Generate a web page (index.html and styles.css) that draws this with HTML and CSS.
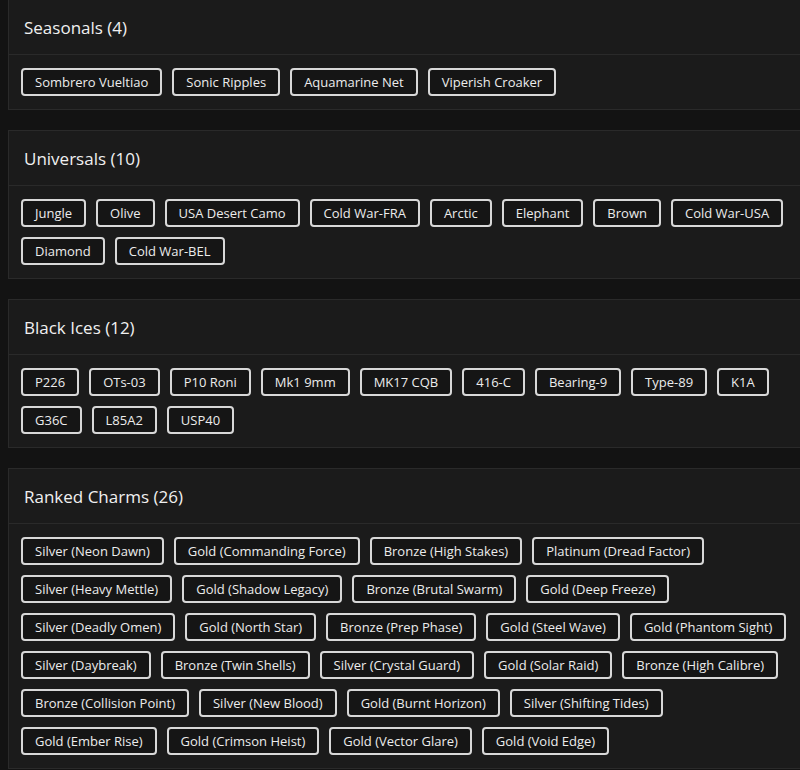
FILE: index.html
```html
<!DOCTYPE html>
<html>
<head>
<meta charset="utf-8">
<link rel="stylesheet" href="styles.css">
</head>
<body>
<main class="page">
  <section class="card">
    <h2 class="card-title">Seasonals (4)</h2>
    <div class="chips">
      <span class="chip">Sombrero Vueltiao</span>
      <span class="chip">Sonic Ripples</span>
      <span class="chip">Aquamarine Net</span>
      <span class="chip">Viperish Croaker</span>
    </div>
  </section>
  <section class="card">
    <h2 class="card-title">Universals (10)</h2>
    <div class="chips">
      <span class="chip">Jungle</span>
      <span class="chip">Olive</span>
      <span class="chip">USA Desert Camo</span>
      <span class="chip">Cold War-FRA</span>
      <span class="chip">Arctic</span>
      <span class="chip">Elephant</span>
      <span class="chip">Brown</span>
      <span class="chip">Cold War-USA</span>
      <span class="chip">Diamond</span>
      <span class="chip">Cold War-BEL</span>
    </div>
  </section>
  <section class="card">
    <h2 class="card-title">Black Ices (12)</h2>
    <div class="chips">
      <span class="chip">P226</span>
      <span class="chip">OTs-03</span>
      <span class="chip">P10 Roni</span>
      <span class="chip">Mk1 9mm</span>
      <span class="chip">MK17 CQB</span>
      <span class="chip">416-C</span>
      <span class="chip">Bearing-9</span>
      <span class="chip">Type-89</span>
      <span class="chip">K1A</span>
      <span class="chip">G36C</span>
      <span class="chip">L85A2</span>
      <span class="chip">USP40</span>
    </div>
  </section>
  <section class="card">
    <h2 class="card-title">Ranked Charms (26)</h2>
    <div class="chips">
      <span class="chip">Silver (Neon Dawn)</span>
      <span class="chip">Gold (Commanding Force)</span>
      <span class="chip">Bronze (High Stakes)</span>
      <span class="chip">Platinum (Dread Factor)</span>
      <span class="chip">Silver (Heavy Mettle)</span>
      <span class="chip">Gold (Shadow Legacy)</span>
      <span class="chip">Bronze (Brutal Swarm)</span>
      <span class="chip">Gold (Deep Freeze)</span>
      <span class="chip">Silver (Deadly Omen)</span>
      <span class="chip">Gold (North Star)</span>
      <span class="chip">Bronze (Prep Phase)</span>
      <span class="chip">Gold (Steel Wave)</span>
      <span class="chip">Gold (Phantom Sight)</span>
      <span class="chip">Silver (Daybreak)</span>
      <span class="chip">Bronze (Twin Shells)</span>
      <span class="chip">Silver (Crystal Guard)</span>
      <span class="chip">Gold (Solar Raid)</span>
      <span class="chip">Bronze (High Calibre)</span>
      <span class="chip">Bronze (Collision Point)</span>
      <span class="chip">Silver (New Blood)</span>
      <span class="chip">Gold (Burnt Horizon)</span>
      <span class="chip">Silver (Shifting Tides)</span>
      <span class="chip">Gold (Ember Rise)</span>
      <span class="chip">Gold (Crimson Heist)</span>
      <span class="chip">Gold (Vector Glare)</span>
      <span class="chip">Gold (Void Edge)</span>
    </div>
  </section>
</main>
</body>
</html>
```
FILE: styles.css
```css
html, body {
  margin: 0;
  padding: 0;
  background: #131313;
  overflow: hidden;
}
body {
  font-family: "Open Sans", "DejaVu Sans", sans-serif;
  color: #e6e6e6;
}
.page {
  width: 800px;
  margin-top: -1px;
  padding-left: 8px;
  display: flex;
  flex-direction: column;
  gap: 20px;
}
.card {
  background: #1b1b1b;
  border: 1px solid #2a2a2a;
  border-right: none;
}
.card-title {
  margin: 0;
  height: 54px;
  padding: 0 15px;
  display: flex;
  align-items: center;
  font-size: 17px;
  font-weight: 500;
  color: #f0f0f0;
  border-bottom: 1px solid #2a2a2a;
}
.chips {
  display: flex;
  flex-wrap: wrap;
  gap: 10px;
  padding: 13px 12px;
}
.chip {
  display: inline-flex;
  align-items: center;
  height: 24px;
  padding: 0 12px;
  border: 2px solid #d8d8d8;
  border-radius: 4px;
  background: #151515;
  font-size: 13px;
  color: #ececec;
  white-space: nowrap;
}
```
